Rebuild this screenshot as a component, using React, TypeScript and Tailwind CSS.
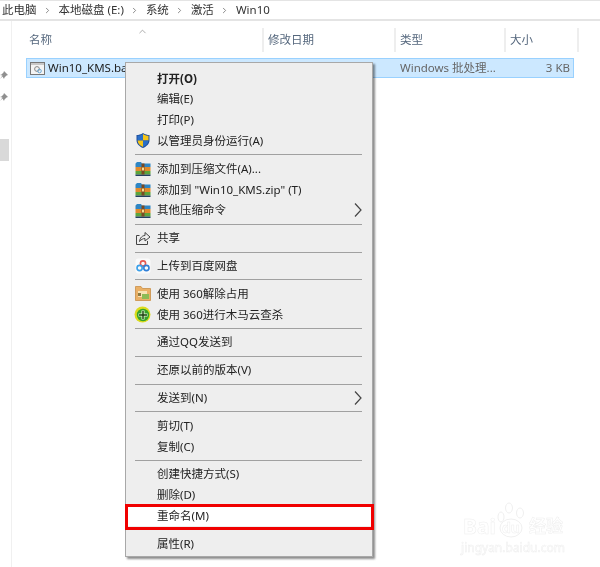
import { ChevronRight, ChevronUp } from 'lucide-react';

const font = { fontFamily: '"Noto Sans", "Noto Sans CJK SC", sans-serif' };

const Shield = () => (
  <svg width="16" height="17" viewBox="0 0 16 17">
    <path d="M8 1 C10 2.5 12.5 3 14.5 3 V8 C14.5 12 11.5 14.5 8 16 C4.5 14.5 1.5 12 1.5 8 V3 C3.5 3 6 2.5 8 1Z" fill="#1f4f9c" />
    <path d="M8 2 V8.5 H2.5 V3.8 C4.5 3.7 6.5 3.2 8 2Z" fill="#2a6fc9" />
    <path d="M8 2 C9.5 3.2 11.5 3.7 13.5 3.8 V8.5 H8Z" fill="#f5c518" />
    <path d="M2.6 8.5 H8 V15 C5 13.6 2.8 11.6 2.6 8.5Z" fill="#f5c518" />
    <path d="M8 8.5 H13.4 C13.2 11.6 11 13.6 8 15Z" fill="#2a6fc9" />
  </svg>
);

const Rar = () => (
  <svg width="16" height="15" viewBox="0 0 16 15">
    <path d="M0.5 2.5 L2 1 H6 L7 2.5 H15.5 V6 H0.5Z" fill="#2f86c4" />
    <rect x="0.5" y="6" width="15" height="4" fill="#e08a2c" />
    <rect x="0.5" y="10" width="15" height="3.5" fill="#5da53c" />
    <rect x="0.5" y="13.5" width="15" height="1.5" fill="#23405f" />
    <rect x="6.5" y="2.5" width="3" height="11" fill="#7b4a22" />
    <rect x="7" y="6.5" width="2" height="3" fill="#f6dc93" />
  </svg>
);

const Share = () => (
  <svg width="16" height="16" viewBox="0 0 16 16" fill="none" stroke="#444" strokeWidth="1">
    <path d="M1.5 5.5 V14.5 H12.5 V11" />
    <path d="M1.5 5.5 H4.5" />
    <path d="M4.5 11.5 C5 7.5 7.5 5.5 10 5.5 V2.5 L15 7 L10 11 V8.5 C8 8.5 6 9.5 4.5 11.5Z" />
  </svg>
);

const BaiduCloud = () => (
  <svg width="16" height="16" viewBox="0 0 16 16">
    <rect x="0.5" y="0.5" width="15" height="15" rx="3" fill="#fafafa" />
    <circle cx="8" cy="5.5" r="2.6" fill="none" stroke="#e8574f" strokeWidth="1.6" />
    <circle cx="4.6" cy="10" r="2.6" fill="none" stroke="#3b9fe8" strokeWidth="1.6" />
    <circle cx="11.4" cy="10" r="2.6" fill="none" stroke="#2f7fd8" strokeWidth="1.6" />
  </svg>
);

const Folder360 = () => (
  <svg width="16" height="15" viewBox="0 0 16 15">
    <path d="M0.5 0.5 H6 L7.5 2.5 H15.5 V14.5 H0.5Z" fill="#eab066" stroke="#c98f48" strokeWidth="0.8" />
    <rect x="3" y="5" width="9" height="6" fill="#f7e3b4" />
    <rect x="7" y="8" width="7" height="5" fill="#8dbb55" />
    <rect x="3" y="7" width="3" height="3" fill="#8c7a44" />
  </svg>
);

const Scan360 = () => (
  <svg width="17" height="17" viewBox="0 0 17 17">
    <circle cx="8.5" cy="8.5" r="8" fill="#dcdc1e" />
    <circle cx="9" cy="9" r="6.2" fill="#35a32a" />
    <path d="M9 4.5 V13.5 M4.5 9 H13.5" stroke="#e9f7d8" strokeWidth="3" />
    <path d="M9 5 V13 M5 9 H13" stroke="#17400f" strokeWidth="1.4" />
  </svg>
);

const Arrow = () => (
  <svg className="ml-auto mr-[10px]" width="8" height="14" viewBox="0 0 8 14" fill="none" stroke="#444" strokeWidth="1.2">
    <path d="M1 0.5 L7 7 L1 13.5" />
  </svg>
);

const Sep = () => (
  <div className="h-[7px] flex items-center pl-[9px] pr-[10px]">
    <div className="h-px w-full bg-[#a0a0a0]" />
  </div>
);

const Item = ({ label, icon, bold, arrow }: { label: string; icon?: React.ReactNode; bold?: boolean; arrow?: boolean }) => (
  <div className="h-[20.8px] flex items-center">
    <div className="w-[31px] flex justify-center pl-[2px] shrink-0">{icon}</div>
    <span className={`text-[11.5px] leading-[15px] mb-[1px] whitespace-pre text-[#222] ${bold ? 'font-bold' : ''}`}>{label}</span>
    {arrow && <Arrow />}
  </div>
);

const ContextMenu = () => (
  <div className="absolute left-[125px] top-[62px] w-[248px] h-[495px] bg-[#eeeeee] border border-[#a8a8a8] shadow-[2px_2px_2px_rgba(0,0,0,0.45)] pt-[5.2px]">
    <Item label="打开(O)" bold />
    <Item label="编辑(E)" />
    <Item label="打印(P)" />
    <Item label="以管理员身份运行(A)" icon={<Shield />} />
    <Sep />
    <Item label="添加到压缩文件(A)..." icon={<Rar />} />
    <Item label={'添加到 "Win10_KMS.zip" (T)'} icon={<Rar />} />
    <Item label="其他压缩命令" icon={<Rar />} arrow />
    <Sep />
    <Item label="共享" icon={<Share />} />
    <Sep />
    <Item label="上传到百度网盘" icon={<BaiduCloud />} />
    <Sep />
    <Item label="使用 360解除占用" icon={<Folder360 />} />
    <Item label="使用 360进行木马云查杀" icon={<Scan360 />} />
    <Sep />
    <Item label="通过QQ发送到" />
    <Sep />
    <Item label="还原以前的版本(V)" />
    <Sep />
    <Item label="发送到(N)" arrow />
    <Sep />
    <Item label="剪切(T)" />
    <Item label="复制(C)" />
    <Sep />
    <Item label="创建快捷方式(S)" />
    <Item label="删除(D)" />
    <div className="relative bg-white">
      <Item label="重命名(M)" />
      <div className="absolute left-[-1px] right-[-2px] top-[-2px] bottom-[-4px] border-[3px] border-[#f00000]" />
    </div>
    <Sep />
    <Item label="属性(R)" />
  </div>
);

const Crumb = ({ text, last }: { text: string; last?: boolean }) => (
  <>
    <span className="text-[11.5px] text-[#333]">{text}</span>
    {!last && <ChevronRight className="w-[9px] h-[9px] mx-[6.5px] text-[#666]" strokeWidth={2} />}
  </>
);

const Header = ({ label, width, pad = 'pl-[4px]' }: { label: string; width: string; pad?: string }) => (
  <div className={`${width} ${pad} shrink-0 h-[24px] flex items-center border-r-2 border-[#eeeeee] text-[11.5px] text-[#55677d]`}>{label}</div>
);

const NavPin = ({ className }: { className: string }) => (
  <svg className={className} width="8" height="8" viewBox="0 0 8 8" fill="#8f8f8f">
    <path d="M4 0 L8 4 L6.5 4.5 L4.5 6.5 L4 8 L2.5 5.5 L0 8 L2.5 4.5 L0 4 L1.5 3.5 L3.5 1.5Z" />
  </svg>
);

export default function App() {
  return (
    <div className="relative w-[600px] h-[567px] bg-white overflow-hidden blur-[0.3px]" style={font}>
      {/* Breadcrumb */}
      <div className="h-[21px] flex items-center pl-[2px] border-t border-b-2 border-[#e4e4e4]">
        <Crumb text="此电脑" />
        <Crumb text="本地磁盘 (E:)" />
        <Crumb text="系统" />
        <Crumb text="激活" />
        <Crumb text="Win10" last />
      </div>

      <div className="flex">
        {/* Nav pane */}
        <div className="w-[12px] shrink-0 h-[546px] border-r border-[#f0f0f0] flex flex-col">
          <NavPin className="mt-[50px]" />
          <NavPin className="mt-[14px]" />
          <div className="w-[9px] h-[22px] mt-[38px] bg-[#d9d9d9]" />
        </div>

        {/* File list */}
        <div className="flex-1 min-w-0 pl-[14px]">
          <div className="relative flex mt-[7px]">
            <ChevronUp className="absolute left-[111px] top-[-2px] w-[11px] h-[11px] text-[#888]" strokeWidth={1.5} />
            <Header label="名称" width="w-[238px]" pad="pl-[3px]" />
            <Header label="修改日期" width="w-[132px]" />
            <Header label="类型" width="w-[110px]" />
            <Header label="大小" width="w-[73px]" />
          </div>
          <div className="w-[548px] h-[20px] mt-[6px] flex items-center bg-[#cce8ff] border border-[#99d1ff]">
            <div className="w-[21px] flex justify-center">
              <svg width="15" height="13" viewBox="0 0 15 13">
                <rect x="0.5" y="0.5" width="14" height="12" fill="#f4f4f4" stroke="#777" />
                <rect x="1" y="1" width="13" height="2" fill="#c8c8c8" />
                <circle cx="7" cy="7" r="2.4" fill="none" stroke="#888" />
                <circle cx="9.5" cy="9" r="1.8" fill="none" stroke="#6aa9d6" />
              </svg>
            </div>
            <span className="w-[352px] text-[11.5px] text-[#222]">Win10_KMS.bat</span>
            <span className="w-[110px] text-[11.5px] text-[#666]">Windows 批处理...</span>
            <span className="flex-1 text-right pr-[3px] text-[11.5px] text-[#666]">3 KB</span>
          </div>
        </div>
      </div>

      <ContextMenu />

      {/* Watermark */}
      <div className="absolute left-[460px] top-[502px] w-[106px] flex flex-col items-center text-transparent [-webkit-text-stroke:0.5px_#eeeeee]">
        <div className="flex items-end h-[36px]">
          <span className="text-[21px] font-bold leading-[24px]">Bai</span>
          <div className="relative w-[31px] h-[36px]">
            <svg width="31" height="36" viewBox="0 0 31 36" fill="none" stroke="#f0f0f0" strokeWidth="1">
              <ellipse cx="15" cy="26" rx="11" ry="9" />
              <ellipse cx="5" cy="15" rx="3" ry="5" />
              <ellipse cx="13" cy="6" rx="3.5" ry="5" />
              <ellipse cx="24" cy="11" rx="3.5" ry="5" />
            </svg>
            <span className="absolute left-[6px] top-[17px] text-[14px] font-bold leading-[18px]">du</span>
          </div>
          <span className="text-[17px] font-bold leading-[24px] ml-[2px]">经验</span>
        </div>
        <span className="text-[12px] leading-[14px] mt-[3px]">jingyan.baidu.com</span>
      </div>
    </div>
  );
}
